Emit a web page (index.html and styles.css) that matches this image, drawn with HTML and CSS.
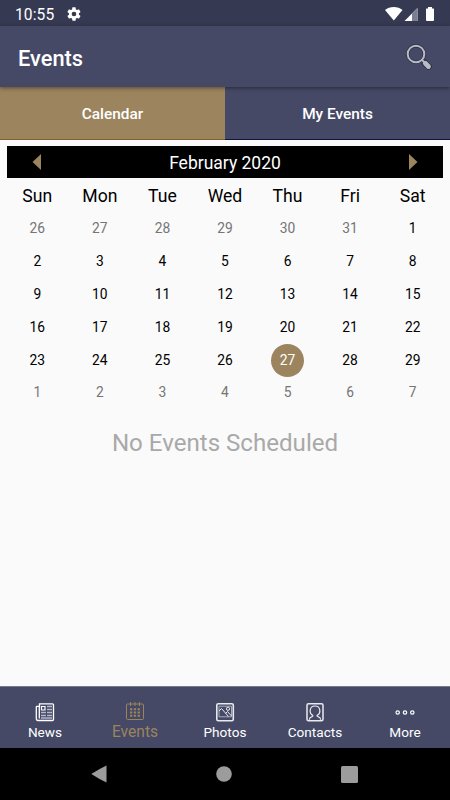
FILE: index.html
```html
<!DOCTYPE html>
<html lang="en">
<head>
    <meta charset="UTF-8">
    <title>Events</title>
    <link rel="stylesheet" href="styles.css">
</head>
<body>
    <div class="status-bar">
        <span class="clock">10:55</span>
        <svg class="gear" width="16" height="16" viewBox="0 0 24 24">
            <path fill="#fff" d="M19.4 13a7.500 7.500 0 0 0 0-2l2.100-1.600c.2-.2.3-.4.100-.7l-2-3.400c-.1-.2-.4-.3-.6-.2l-2.500 1a7 7 0 0 0-1.700-1l-.4-2.600c0-.3-.2-.5-.4-.5h-4c-.3 0-.5.2-.5.4l-.4 2.700a7 7 0 0 0-1.700 1l-2.500-1c-.2-.1-.5 0-.6.2l-2 3.400c-.1.2-.1.5.1.700L4.500 11a7.500 7.500 0 0 0 0 2l-2.100 1.600c-.2.2-.2.400-.1.700l2 3.400c.1.200.4.300.6.200l2.500-1a7 7 0 0 0 1.700 1l.4 2.600c0 .3.200.5.500.5h4c.2 0 .4-.2.400-.4l.4-2.700a7 7 0 0 0 1.700-1l2.500 1c.2.100.5 0 .6-.2l2-3.400c.1-.2.100-.5-.1-.7zM12 15.500a3.500 3.500 0 1 1 0-7 3.500 3.500 0 0 1 0 7z"/>
        </svg>
        <svg class="signals" width="52" height="16" viewBox="0 0 52 16">
            <path fill="#fff" d="M0 4C4.500 0 13 0 17.500 4L8.800 14.500z"/>
            <path fill="#fff" d="M19.500 15 32.500 2v13z"/>
            <path fill="#7b7e92" d="M27 7.500 32.500 2v13H27z"/>
            <path fill="#fff" d="M43 1h4v1.500h1.500q.5 0 .5.500v11q0 1-1 1h-6q-1 0-1-1V3q0-.5.500-.5H43z"/>
        </svg>
    </div>

    <div class="header">
        <h1>Events</h1>
        <svg class="search" width="28" height="28" viewBox="0 0 28 28" fill="none">
            <circle cx="11" cy="11" r="8.300" stroke="#292d42" stroke-width="3.400"/>
            <path stroke="#292d42" stroke-width="6.400" stroke-linecap="round" d="m20 20 3.500 3.500"/>
            <circle cx="11" cy="11" r="8.300" stroke="#b9bac3" stroke-width="2"/>
            <path stroke="#b9bac3" stroke-width="2" d="m17 17 3 3"/>
            <path stroke="#b9bac3" stroke-width="4.800" stroke-linecap="round" d="m20.300 20.300 3.200 3.200"/>
        </svg>
    </div>

    <div class="tabs">
        <div class="tab active">Calendar</div>
        <div class="tab">My Events</div>
    </div>

    <div class="content">
        <div class="month">
            <svg width="9" height="16" viewBox="0 0 9 16"><path fill="#9b845e" d="M9 0v16L.5 8z"/></svg>
            <span>February 2020</span>
            <svg width="9" height="16" viewBox="0 0 9 16"><path fill="#9b845e" d="M0 0v16l8.500-8z"/></svg>
        </div>
        <div class="weekdays">
            <span>Sun</span><span>Mon</span><span>Tue</span><span>Wed</span><span>Thu</span><span>Fri</span><span>Sat</span>
        </div>
        <div class="days">
            <span class="other">26</span><span class="other">27</span><span class="other">28</span><span class="other">29</span><span class="other">30</span><span class="other">31</span><span>1</span>
            <span>2</span><span>3</span><span>4</span><span>5</span><span>6</span><span>7</span><span>8</span>
            <span>9</span><span>10</span><span>11</span><span>12</span><span>13</span><span>14</span><span>15</span>
            <span>16</span><span>17</span><span>18</span><span>19</span><span>20</span><span>21</span><span>22</span>
            <span>23</span><span>24</span><span>25</span><span>26</span><span class="today">27</span><span>28</span><span>29</span>
            <span class="other">1</span><span class="other">2</span><span class="other">3</span><span class="other">4</span><span class="other">5</span><span class="other">6</span><span class="other">7</span>
        </div>
        <p class="empty">No Events Scheduled</p>
    </div>

    <div class="menu">
        <div class="item">
            <svg width="20" height="20" viewBox="0 0 20 20" fill="none" stroke="#fff">
                <path stroke-width="1.300" d="M4.500 1.800h13q1 0 1 1v14.700q0 1-1 1H3q-1.700 0-1.700-2V5q0-.7.700-.7h2.500zM4.300 4v12.500"/>
                <path stroke-width="1.200" d="M6.500 4.500H10V8H6.500z"/>
                <path stroke="#b4b8ca" stroke-width="1.400" d="M12 4.500h5M12 7.500h5M6 10.500h5M12 10.500h5M6 13.500h5M12 13.500h5M6 16h11"/>
            </svg>
            <span>News</span>
        </div>
        <div class="item selected">
            <svg width="20" height="20" viewBox="0 0 20 20" fill="none" stroke="#9b845e">
                <rect x="1.500" y="3" width="17" height="15.500" rx="1"/>
                <path d="M5.500 1v4M10 1v4M14.500 1v4"/>
                <path stroke-width="2" stroke-dasharray="2.300 1.500" d="M5 8.200h10.500M5 11.500h10.500M5 14.800h10.500"/>
            </svg>
            <span>Events</span>
        </div>
        <div class="item">
            <svg width="20" height="20" viewBox="0 0 20 20" fill="none" stroke="#e9eaee">
                <rect x="1.800" y="1.700" width="16.500" height="17" rx="1.500" stroke-width="1.600"/>
                <path stroke="#b4b8ca" stroke-width=".9" d="M4 4.200h12.500v10.600H4z"/>
                <path stroke-width="1" d="M4 9l2.500-2.500 7 8M10.500 11.500l2-2 4 4.500"/>
                <circle cx="13" cy="6.800" r="1.600" stroke-width="1"/>
            </svg>
            <span>Photos</span>
        </div>
        <div class="item">
            <svg width="20" height="20" viewBox="0 0 20 20" fill="none" stroke="#e9eaee">
                <rect x="2" y="1.700" width="16" height="17" rx="1.500" stroke-width="1.500"/>
                <path stroke-width="1.200" d="M8 13.500C3.500 11 4.500 4 10 4s6.500 7 2 9.500q0 1 1.500 1.300 2 .5 2.200 3M8 13.500q0 1-1.500 1.300-2 .5-2.200 3"/>
            </svg>
            <span>Contacts</span>
        </div>
        <div class="item">
            <svg width="20" height="20" viewBox="0 0 20 20" fill="none" stroke="#fff" stroke-width="1.200">
                <circle cx="2.700" cy="10.500" r="1.700"/>
                <circle cx="10" cy="10.500" r="1.700"/>
                <circle cx="17.300" cy="10.500" r="1.700"/>
            </svg>
            <span>More</span>
        </div>
    </div>

    <div class="nav-bar">
        <svg width="16" height="18" viewBox="0 0 16 18"><path fill="#9c9c9c" d="M15.500.5v17Q8 14 .3 9 8 4 15.500.5z"/></svg>
        <svg width="16" height="16" viewBox="0 0 16 16"><circle cx="8" cy="8" r="7.800" fill="#9c9c9c"/></svg>
        <svg width="17" height="17" viewBox="0 0 17 17"><rect width="17" height="17" rx="1.500" fill="#9c9c9c"/></svg>
    </div>
</body>
</html>
```
FILE: styles.css
```css
* {
    box-sizing: border-box;
}
body {
    display: flex;
    flex-direction: column;
    height: 800px;
    margin: 0;
    font-family: Roboto, sans-serif;
    background-color: #fafafa;
    overflow: hidden;
}
svg {
    display: block;
    flex: none;
}
.status-bar {
    display: flex;
    align-items: center;
    height: 26px;
    padding: 1px 15px 0 15px;
    background-color: #363952;
    color: #ffffff;
}
.clock {
    width: 51px;
    padding-top: 2px;
    font-size: 15.6px;
    line-height: 24px;
    letter-spacing: 0.1px;
}
.signals {
    margin-left: auto;
    margin-right: -2px;
}
.header {
    display: flex;
    align-items: center;
    justify-content: space-between;
    height: 61px;
    padding: 1px 17px 0 18px;
    background-color: #454966;
    color: #ffffff;
    box-shadow: 0 1px 4px rgba(0, 0, 0, 0.45);
    z-index: 1;
}
h1 {
    margin: 0;
    padding-top: 2px;
    font-size: 21.8px;
    font-weight: 500;
}
.tabs {
    display: flex;
    height: 53px;
}
.tab {
    flex: 1;
    border-bottom: 1px solid #111440;
    background-color: #454966;
    color: #ffffff;
    font-size: 15.4px;
    font-weight: 500;
    line-height: 55px;
    text-align: center;
}
.tab.active {
    background-color: #9b845e;
    border-color: #816420;
}
.content {
    flex: 1;
    padding: 6px 6px 0;
}
.month {
    display: flex;
    align-items: center;
    justify-content: space-between;
    height: 32px;
    margin: 0 1px;
    padding: 0 25px;
    background-color: #000000;
    color: #ffffff;
    font-size: 17.5px;
    line-height: 34px;
}
.month span {
    padding-top: 2px;
}
.weekdays, .days {
    display: grid;
    grid-template-columns: repeat(7, 1fr);
    text-align: center;
}
.weekdays {
    font-size: 17.6px;
    line-height: 36px;
    height: 34px;
}
.days {
    grid-auto-rows: 32.9px;
    justify-items: center;
    align-items: center;
    font-size: 13.8px;
}
.days span {
    width: 33px;
    height: 33px;
    line-height: 33px;
}
.days .other {
    color: #757575;
}
.days .today {
    border-radius: 50%;
    background-color: #9b845e;
    color: #ffffff;
}
.empty {
    margin: 17px 0 0;
    color: #a9a9a9;
    font-size: 24.1px;
    line-height: 34px;
    text-align: center;
}
.menu {
    display: flex;
    height: 62px;
    border-top: 1px solid #777a8d;
    background-color: #454966;
    color: #ffffff;
}
.item {
    display: flex;
    flex: 1;
    flex-direction: column;
    align-items: center;
    padding-top: 15px;
    font-size: 13.6px;
    line-height: 20px;
}
.item.selected {
    padding-top: 14px;
    color: #9b845e;
    font-size: 15.6px;
    line-height: 22px;
}
.nav-bar {
    display: flex;
    align-items: center;
    justify-content: space-between;
    height: 52px;
    padding: 0 92px 0 91px;
    background-color: #000000;
}
```
